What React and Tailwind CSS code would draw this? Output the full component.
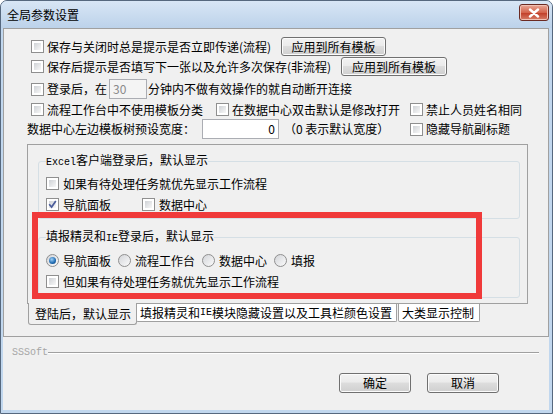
import React from 'react';

const Box = ({ checked }) => (
  <span className="relative w-[13px] h-[13px] shrink-0 border border-[#8f8f8f] bg-white">
    <span className="absolute inset-[2px] bg-gradient-to-br from-[#cfd2d6] to-[#f8f8f8]" />
    {checked && (
      <svg className="absolute left-0 top-0" viewBox="0 0 11 11" width="11" height="11">
        <path d="M2.2 5.2 L4.6 8 L8.8 2" stroke="#4b5d9b" strokeWidth="1.7" fill="none" />
      </svg>
    )}
  </span>
);

const Radio = ({ checked }) => (
  <span className="w-[13px] h-[13px] shrink-0 rounded-full border border-[#8f8f8f] bg-gradient-to-br from-[#d3d5d9] to-[#fbfbfb] flex items-center justify-center">
    {checked && (
      <span className="w-[7px] h-[7px] rounded-full bg-[radial-gradient(circle_at_40%_35%,#9fd0f7,#1d69b0_60%,#0c3c70)]" />
    )}
  </span>
);

const Check = ({ checked, children, className = '' }) => (
  <div className={`flex items-center gap-[3px] ${className}`}>
    <Box checked={checked} />
    <span className="whitespace-nowrap">{children}</span>
  </div>
);

const Btn = ({ children, className = '' }) => (
  <div
    className={`flex items-center justify-center border border-[#707070] rounded-[3px] bg-[linear-gradient(#f2f2f2,#ebebeb_45%,#dddddd_50%,#cfcfcf)] shadow-[inset_0_0_0_1px_#fbfbfb] whitespace-nowrap ${className}`}
  >
    {children}
  </div>
);

const mono = "font-['Liberation_Mono',monospace] text-[10px]";

export default function App() {
  return (
    <div className="relative w-[558px] h-[414px] bg-white font-['Noto_Sans_CJK_SC',sans-serif] text-[12px] leading-[16px] text-black">
      <div className="w-[553px] h-[414px] flex flex-col border border-[#56687e] rounded-t-[7px] bg-[#c1d7ee]">
        {/* title bar */}
        <div className="h-[27px] shrink-0 flex justify-between pl-[6px] pr-[3px] rounded-t-[6px] bg-gradient-to-b from-[#d8e6f5] to-[#bcd2ea]">
          <span className="self-center text-[12px]">全局参数设置</span>
          <div className="mt-[3px] w-[30px] h-[17px] flex items-center justify-center border border-[#6b2a22] rounded-[3px] bg-[linear-gradient(#e9a898,#d4644c_50%,#c2402a_55%,#d77e68)] shadow-[inset_0_0_0_1px_#f1c1b4]">
            <svg width="12" height="10" viewBox="0 0 12 10">
              <path d="M2 1.5 L10 8.5 M10 1.5 L2 8.5" stroke="#fff" strokeWidth="2.4" strokeLinecap="round" />
            </svg>
          </div>
        </div>

        {/* client */}
        <div className="flex-1 ml-[2px] mr-[3px] mb-[3px] bg-[#f0f0f0] flex flex-col">
          <div className="h-[309px] shrink-0 border border-[#a0a0a0] flex flex-col">
            <div className="mt-[8px] h-[19px] flex items-center pl-[27px]">
              <Check>保存与关闭时总是提示是否立即传递(流程)</Check>
              <Btn className="ml-[10px] w-[105px] h-[19px]">应用到所有模板</Btn>
            </div>
            <div className="mt-[1px] h-[19px] flex items-center pl-[27px]">
              <Check>保存后提示是否填写下一张以及允许多次保存(非流程)</Check>
              <Btn className="ml-[10px] w-[106px] h-[19px]">应用到所有模板</Btn>
            </div>
            <div className="mt-[3px] h-[20px] flex items-center pl-[27px]">
              <Box />
              <span className="ml-[3px]">登录后，在</span>
              <div className="ml-[2px] w-[38px] h-[20px] border border-[#abadb3] bg-[#f4f4f4] text-[#8a8a8a] pl-[3px] flex items-center">30</div>
              <span className="ml-[1px]">分钟内不做有效操作的就自动断开连接</span>
            </div>
            <div className="mt-[1px] h-[19px] flex items-center pl-[27px]">
              <Check className="w-[185px]">流程工作台中不使用模板分类</Check>
              <Check className="w-[194px]">在数据中心双击默认是修改打开</Check>
              <Check>禁止人员姓名相同</Check>
            </div>
            <div className="h-[20px] flex items-center pl-[23px]">
              <div className="w-[383px] flex items-center">
                <span>数据中心左边模板树预设宽度：</span>
                <div className="ml-[7px] w-[77px] h-[20px] border border-[#abadb3] bg-white pr-[3px] flex items-center justify-end">0</div>
                <span className="ml-[5px]">（0 表示默认宽度）</span>
              </div>
              <Check>隐藏导航副标题</Check>
            </div>

            {/* tab panel */}
            <div className="mt-[5px] ml-[23px] w-[501px] h-[160px] shrink-0 border border-[#a0a0a0] flex flex-col">
              <fieldset className="mt-[7px] ml-[10px] mr-[7px] border border-[#d5dfe5] rounded-[3px] pl-[7px] pt-[2px] pb-[3px]">
                <legend className="leading-[16px] whitespace-nowrap">
                  <span className={mono}>Excel</span>客户端登录后，默认显示
                </legend>
                <div className="h-[21px] flex items-center">
                  <Check className="gap-[4px]">如果有待处理任务就优先显示工作流程</Check>
                </div>
                <div className="h-[21px] flex items-center">
                  <Check checked className="gap-[4px] w-[96px]">导航面板</Check>
                  <Check className="gap-[4px]">数据中心</Check>
                </div>
              </fieldset>
              <fieldset className="mt-[9px] ml-[10px] mr-[7px] border border-[#d5dfe5] rounded-[3px] pl-[7px] pt-[3px] pb-[5px]">
                <legend className="leading-[16px] whitespace-nowrap">
                  填报精灵和<span className={mono}>IE</span>登录后，默认显示
                </legend>
                <div className="h-[21px] flex items-center">
                  {['导航面板', '流程工作台', '数据中心', '填报'].map((t, i) => (
                    <div key={t} className="flex items-center gap-[4px] mr-[7px]">
                      <Radio checked={i === 0} />
                      <span>{t}</span>
                    </div>
                  ))}
                </div>
                <div className="h-[21px] flex items-center">
                  <Check className="gap-[4px]">但如果有待处理任务就优先显示工作流程</Check>
                </div>
              </fieldset>
            </div>

            {/* tabs */}
            <div className="ml-[24px] flex items-start">
              <div className="-mt-px w-[109px] h-[22px] border border-t-0 border-[#a0a0a0] rounded-b-[3px] bg-[#f0f0f0] pl-[6px] flex items-center">
                登陆后，默认显示
              </div>
              <div className="-ml-px w-[261px] h-[18px] border border-t-0 border-[#a0a0a0] rounded-b-[2px] bg-white pl-[3px] flex items-center whitespace-nowrap">
                填报精灵和<span className={mono}>IE</span>模块隐藏设置以及工具栏颜色设置
              </div>
              <div className="ml-[1px] w-[82px] h-[18px] border border-t-0 border-[#a0a0a0] rounded-b-[2px] bg-white pl-[3px] flex items-center">
                大类显示控制
              </div>
            </div>
          </div>

          {/* footer */}
          <div className="mt-[9px] h-[14px] flex items-center pl-[9px] pr-[10px]">
            <span className={`${mono} text-[#a6a6a6]`}>SSSoft</span>
            <div className="flex-1 h-[2px] border-t border-[#a0a0a0] border-b border-b-white" />
          </div>
          <div className="mt-[13px] flex justify-end gap-[16px] pr-[50px]">
            <Btn className="w-[72px] h-[20px] border-[#3c7fb1] shadow-[inset_0_0_0_1px_#a9dbf6]">确定</Btn>
            <Btn className="w-[72px] h-[20px]">取消</Btn>
          </div>
        </div>
      </div>

      {/* red highlight annotation */}
      <div className="absolute left-[32px] top-[212px] w-[450px] h-[87px] border-[6px] border-[#f03a3a]" />
    </div>
  );
}
